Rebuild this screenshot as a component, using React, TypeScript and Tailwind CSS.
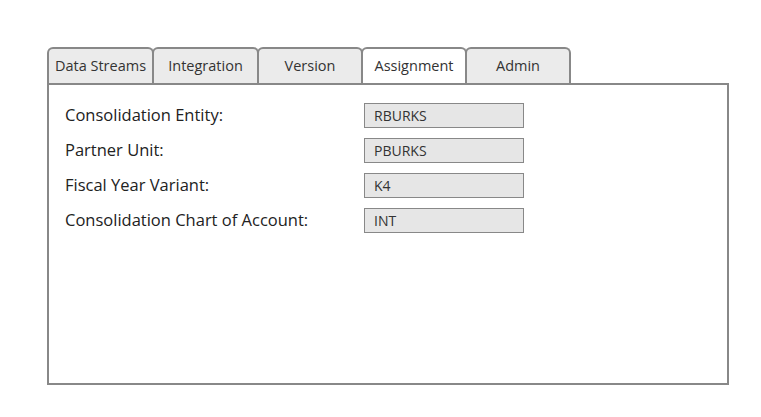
const tabs = [
  { label: 'Data Streams', w: 'w-[107px]' },
  { label: 'Integration', w: 'w-[107px]' },
  { label: 'Version', w: 'w-[106px]' },
  { label: 'Assignment', w: 'w-[106px]', active: true },
  { label: 'Admin', w: 'w-[106px]' },
]

const fields = [
  { label: 'Consolidation Entity:', value: 'RBURKS' },
  { label: 'Partner Unit:', value: 'PBURKS' },
  { label: 'Fiscal Year Variant:', value: 'K4' },
  { label: 'Consolidation Chart of Account:', value: 'INT' },
]

export default function App() {
  return (
    <div className="w-[761px] h-[417px] bg-white pt-[47px] pl-[47px] text-[#333] font-['Open_Sans',sans-serif]">
      <div className="flex h-[36px]">
        {tabs.map((t, i) => (
          <div
            key={t.label}
            className={`${t.w} ${i > 0 ? '-ml-[2px]' : ''} h-full flex items-center justify-center pb-[1px] border-2 border-b-0 border-[#888] rounded-t-[6px] text-[14.5px] ${t.active ? 'bg-white' : 'bg-[#ebebeb]'}`}
          >
            {t.label}
          </div>
        ))}
      </div>
      <div className="w-[682px] h-[302px] border-2 border-[#888] pt-[18px] pl-[16px] flex flex-col gap-[10px]">
        {fields.map((f) => (
          <div key={f.label} className="flex items-center h-[25px]">
            <div className="w-[299px] text-[16.5px] text-[#222]">{f.label}</div>
            <div className="w-[160px] h-[25px] border border-[#888] bg-[#e6e6e6] pl-[9px] flex items-center text-[14px]">
              {f.value}
            </div>
          </div>
        ))}
      </div>
    </div>
  )
}
